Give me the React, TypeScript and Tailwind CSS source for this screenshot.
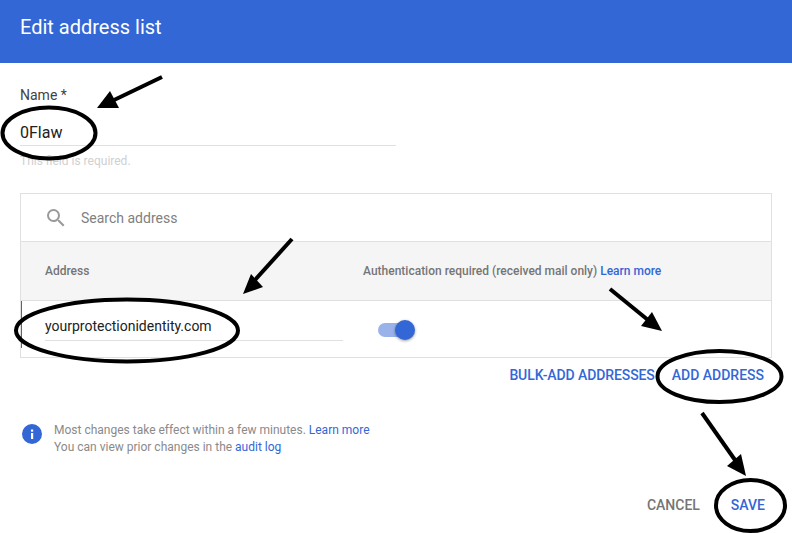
const font = "font-['Roboto',sans-serif]"

function Annotations() {
  return (
    <svg className="absolute left-0 top-0 pointer-events-none" width="792" height="533" viewBox="0 0 792 533" fill="none">
      <g stroke="#000" strokeWidth="4">
        <ellipse cx="49" cy="133" rx="46.5" ry="25.5" />
        <ellipse cx="127" cy="330.5" rx="111" ry="31" />
        <ellipse cx="719.5" cy="376.5" rx="62" ry="25.5" />
        <ellipse cx="750.5" cy="505.5" rx="34.5" ry="25.5" />
        <path d="M162 77L112 101" />
        <path d="M292 239L255 280" />
        <path d="M610 289L648 320" />
        <path d="M702 413L735 460" />
      </g>
      <g fill="#000">
        <path d="M97 108L110 91L119 108Z" />
        <path d="M243 294L251 274L263 287Z" />
        <path d="M662 331L652 312L641 326Z" />
        <path d="M746 476L741 454L727 466Z" />
      </g>
    </svg>
  )
}

export default function App() {
  return (
    <div className={`relative w-[792px] h-[533px] overflow-hidden bg-white ${font}`}>
      {/* header */}
      <div className="h-[63px] bg-[#3367d6] pl-5 pt-[13px] text-[20px] leading-[28px] text-white">
        Edit address list
      </div>

      {/* name field */}
      <div className="pl-5 pt-[23px]">
        <div className="text-sm leading-[18px] text-[#424242]">Name *</div>
        <div className="mt-[17px] w-[376px] h-[25px] border-b border-[#e0e0e0] text-base leading-[24px] text-[#212121]">
          0Flaw
        </div>
        <div className="mt-[7px] text-xs leading-[16px] text-[#d0d0d0]">This field is required.</div>
      </div>

      {/* address table */}
      <div className="mx-5 mt-[24px] h-[165px] border border-[#e0e0e0] flex flex-col">
        <div className="h-[47px] flex items-center pl-[23px] gap-[13px]">
          <svg width="24" height="24" viewBox="0 0 24 24" fill="#9a9a9a">
            <path d="M15.5 14h-.79l-.28-.27A6.47 6.47 0 0 0 16 9.5 6.5 6.5 0 1 0 9.5 16c1.61 0 3.09-.59 4.23-1.57l.27.28v.79l5 4.99L20.49 19l-4.99-5zm-6 0C7.01 14 5 11.99 5 9.5S7.01 5 9.5 5 14 7.01 14 9.5 11.99 14 9.5 14z" />
          </svg>
          <span className="text-sm text-[#808080]">Search address</span>
        </div>
        <div className="h-[60px] flex items-center bg-[#f5f5f5] border-y border-[#e0e0e0] text-xs text-[#757575] font-medium">
          <div className="w-[342px] pl-6">Address</div>
          <div>
            Authentication required (received mail only) <span className="text-[#3367d6]">Learn more</span>
          </div>
        </div>
        <div className="flex-1 flex">
          <div className="w-[342px] pl-[23px] h-[47px] border-l border-[#3367d6]">
            <div className="w-[298px] h-[40px] pt-[15px] border-b border-[#e0e0e0] text-sm leading-[20px] text-[#212121]">
              yourprotectionidentity.com
            </div>
          </div>
          <div className="relative ml-[15px] mt-[22px] w-[32px] h-[14px] rounded-full bg-[#99b3ea]">
            <div className="absolute right-[-5px] top-[-3px] w-5 h-5 rounded-full bg-[#3367d6] shadow-[0_1px_3px_rgba(0,0,0,0.4)]" />
          </div>
        </div>
      </div>

      {/* table actions */}
      <div className="flex justify-end gap-[17px] pr-7 pt-[8px] text-sm leading-[18px] font-medium text-[#3367d6]">
        <span className="tracking-[-0.1px]">BULK-ADD ADDRESSES</span>
        <span>ADD ADDRESS</span>
      </div>

      {/* info */}
      <div className="flex items-start gap-3 pl-[22px] pt-[38px]">
        <svg width="20" height="20" viewBox="0 0 20 20" className="mt-[2px]">
          <circle cx="10" cy="10" r="10" fill="#3367d6" />
          <rect x="9" y="9" width="2.2" height="6" fill="#fff" />
          <rect x="9" y="5.5" width="2.2" height="2.2" fill="#fff" />
        </svg>
        <div className="text-xs leading-[17px] text-[#8a8a8a]">
          <div>
            Most changes take effect within a few minutes. <span className="text-[#3367d6]">Learn more</span>
          </div>
          <div>
            You can view prior changes in the <span className="text-[#3367d6]">audit log</span>
          </div>
        </div>
      </div>

      {/* footer actions */}
      <div className="flex justify-end gap-[31px] pr-[27px] pt-[40px] text-sm leading-[18px] font-medium">
        <span className="text-[#757575]">CANCEL</span>
        <span className="text-[#3367d6]">SAVE</span>
      </div>

      <Annotations />
    </div>
  )
}
